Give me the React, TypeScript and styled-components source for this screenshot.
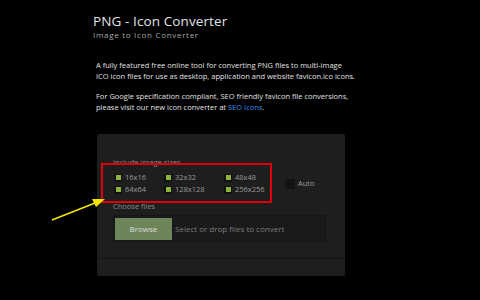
import {createGlobalStyle, styled} from "styled-components";

const GlobalStyle = createGlobalStyle`
  html, body {
    margin: 0;
    padding: 0;
    background: #000;
  }
  body {
    font-family: "Open Sans", "Liberation Sans", sans-serif;
    color: #ddd;
  }
`;

const Page = styled.div`
  position: relative;
  width: 480px;
  height: 300px;
  overflow: hidden;
  background: #000;
`;

const Content = styled.div`
  width: 260px;
  margin-left: 93px;
  padding-top: 12px;
`;

const Title = styled.h1`
  margin: 0;
  font-size: 13.5px;
  font-weight: 400;
  line-height: 18px;
  color: #e2e2e2;
  letter-spacing: 0.1px;
`;

const Subtitle = styled.div`
  font-size: 8px;
  line-height: 10px;
  color: #a8a8a8;
  letter-spacing: 0.7px;
`;

const Intro = styled.div`
  margin: 20px 0 0 3px;
  width: 280px;
`;

const Para = styled.p`
  margin: 0 0 9px;
  font-size: 7.5px;
  line-height: 11px;
  color: #e0e0e0;
`;

const Link = styled.a`
  color: #3a8ee6;
  text-decoration: none;
`;

const Panel = styled.div`
  margin: 21px 0 0 4px;
  width: 248px;
  background: #1e1e1e;
  border-radius: 2px;
`;

const PanelBody = styled.div`
  padding: 24px 16px 16px;
`;

const Label = styled.div`
  font-size: 7.5px;
  line-height: 9px;
  color: #8a8a8a;
`;

const SizesRow = styled.div`
  display: flex;
  align-items: center;
  margin-top: 6px;
`;

const SizeGrid = styled.div`
  display: grid;
  grid-template-columns: 50px 60px 55px;
  row-gap: 3px;
  padding-left: 1px;
`;

const SizeItem = styled.label`
  display: flex;
  align-items: center;
  gap: 3px;
  font-size: 7.5px;
  line-height: 9px;
  color: #9a9a9a;
`;

const Check = styled.span<{ $on?: boolean; $size?: number }>`
  display: inline-flex;
  align-items: center;
  justify-content: center;
  width: ${p => p.$size ?? 8}px;
  height: ${p => p.$size ?? 8}px;
  background: #121212;
  border-radius: 1px;

  &::after {
    content: "";
    display: ${p => (p.$on ? "block" : "none")};
    width: 5px;
    height: 5px;
    background: #8fb43a;
  }
`;

const AutoItem = styled(SizeItem)`
  margin-left: 6px;
  gap: 3px;
`;

const FilesLabel = styled(Label)`
  margin-top: 8px;
`;

const FileBox = styled.div`
  display: flex;
  align-items: center;
  margin-top: 4px;
  height: 27px;
  width: 213px;
  padding: 2px 1px;
  box-sizing: border-box;
  background: #1a1a1a;
  border: 1px solid #161616;
`;

const Browse = styled.button`
  height: 22px;
  width: 57px;
  border: none;
  background: #6c8559;
  color: #dedede;
  font-family: inherit;
  font-size: 8px;
  padding: 0;
`;

const Placeholder = styled.span`
  margin-left: 3px;
  font-size: 8px;
  color: #7c7c7c;
`;

const PanelFooter = styled.div`
  height: 17px;
  border-top: 1px solid #151515;
`;

const Highlight = styled.div`
  position: absolute;
  left: 101px;
  top: 163px;
  width: 167px;
  height: 36px;
  border: 2px solid #e0000b;
`;

const Arrow = styled.svg`
  position: absolute;
  left: 0;
  top: 0;
`;

const sizes = ["16x16", "32x32", "48x48", "64x64", "128x128", "256x256"];

export default function App() {
    return (
        <Page>
            <GlobalStyle/>
            <Content>
                <Title>PNG - Icon Converter</Title>
                <Subtitle>Image to Icon Converter</Subtitle>
                <Intro>
                    <Para>
                        A fully featured free online tool for converting PNG files to multi-image<br/>
                        ICO icon files for use as desktop, application and website favicon.ico icons.
                    </Para>
                    <Para>
                        For Google specification compliant, SEO friendly favicon file conversions,<br/>
                        please visit our new icon converter at <Link href="#">SEO Icons</Link>.
                    </Para>
                </Intro>
                <Panel>
                    <PanelBody>
                        <Label>Include image sizes</Label>
                        <SizesRow>
                            <SizeGrid>
                                {sizes.map(s => (
                                    <SizeItem key={s}>
                                        <Check $on/>
                                        {s}
                                    </SizeItem>
                                ))}
                            </SizeGrid>
                            <AutoItem>
                                <Check $size={10}/>
                                Auto
                            </AutoItem>
                        </SizesRow>
                        <FilesLabel>Choose files</FilesLabel>
                        <FileBox>
                            <Browse>Browse</Browse>
                            <Placeholder>Select or drop files to convert</Placeholder>
                        </FileBox>
                    </PanelBody>
                    <PanelFooter/>
                </Panel>
            </Content>
            <Highlight/>
            <Arrow width="480" height="300" viewBox="0 0 480 300">
                <line x1="52" y1="220" x2="95" y2="203" stroke="#f2e600" strokeWidth="1.6"/>
                <polygon points="105,199 92,199 96,207" fill="#f2e600"/>
            </Arrow>
        </Page>
    );
}
